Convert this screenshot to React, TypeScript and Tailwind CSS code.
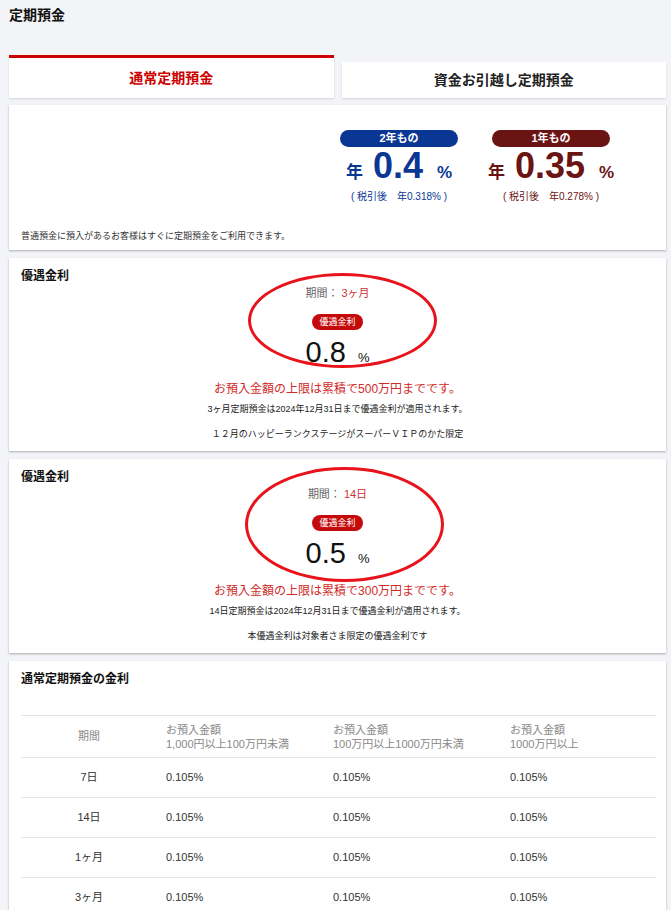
import React from 'react';

const FONT = 'font-["Liberation_Sans","Noto_Sans_CJK_JP",sans-serif]';

type Rate = {
  label: string;
  value: string;
  after: string;
  badge: string;
  text: string;
};

const rates: Rate[] = [
  { label: '2年もの', value: '0.4', after: '0.318', badge: 'bg-[#0b3794]', text: 'text-[#0b3794]' },
  { label: '1年もの', value: '0.35', after: '0.278', badge: 'bg-[#6a1414]', text: 'text-[#6a1414]' },
];

const RateBlock: React.FC<{ rate: Rate }> = ({ rate }) => (
  <div className="w-[118px] flex flex-col items-center">
    <div className={`w-full h-[17px] rounded-full ${rate.badge} text-white text-[11px] font-bold leading-[17px] text-center`}>
      {rate.label}
    </div>
    <div className={`mt-[1px] h-[36px] flex items-baseline whitespace-nowrap ${rate.text} font-bold`}>
      <span className="text-[17px] leading-[36px]">年</span>
      <span className="ml-[10px] text-[36px] leading-[36px]">{rate.value}</span>
      <span className="ml-[14px] text-[17px] leading-[36px]">%</span>
    </div>
    <div className={`mt-[6px] text-[10px] leading-[14px] whitespace-nowrap ${rate.text}`}>
      ( 税引後　年{rate.after}% )
    </div>
  </div>
);

type Special = {
  period: string;
  rate: string;
  limit: string;
  note: string;
  extra: string;
  ellipse: string;
  gap: string;
};

const specials: Special[] = [
  {
    period: '3ヶ月',
    rate: '0.8',
    limit: 'お預入金額の上限は累積で500万円までです。',
    note: '3ヶ月定期預金は2024年12月31日まで優遇金利が適用されます。',
    extra: '１２月のハッピーランクステージがスーパーＶＩＰのかた限定',
    ellipse: 'top-[15px] left-[239px] w-[189px] h-[95px]',
    gap: 'mt-[13px]',
  },
  {
    period: '14日',
    rate: '0.5',
    limit: 'お預入金額の上限は累積で300万円までです。',
    note: '14日定期預金は2024年12月31日まで優遇金利が適用されます。',
    extra: '本優遇金利は対象者さま限定の優遇金利です',
    ellipse: 'top-[8px] left-[236px] w-[199px] h-[115px]',
    gap: 'mt-[14px]',
  },
];

const SpecialCard: React.FC<{ s: Special }> = ({ s }) => (
  <div className="relative bg-white shadow-[0_1px_2px_rgba(0,0,0,0.3)] px-3 pt-[10px] pb-[10px]">
    <div className="text-[12px] leading-[16px] font-bold text-[#111]">優遇金利</div>
    <div className="flex flex-col items-center">
      <div className="mt-[1px] text-[11px] leading-[16px] text-[#666]">
        期間：<span className="ml-[3px] text-[#cc3333]">{s.period}</span>
      </div>
      <div className="mt-[13px] h-[16px] px-[7px] rounded-full bg-[#c40a0a] text-white text-[9px] leading-[16px]">
        優遇金利
      </div>
      <div className="mt-[6px] h-[32px] flex items-baseline text-[#111]">
        <span className="text-[29px] leading-[32px]">{s.rate}</span>
        <span className="ml-[12px] text-[13px] leading-[32px]">%</span>
      </div>
      <div className={`${s.gap} text-[12px] leading-[16px] text-[#d02a2a]`}>{s.limit}</div>
      <div className="mt-[5px] text-[9px] leading-[14px] text-[#222]">{s.note}</div>
      <div className="mt-[11px] text-[9px] leading-[14px] text-[#222]">{s.extra}</div>
    </div>
    <div className={`absolute ${s.ellipse} rounded-[50%] border-[3px] border-[#e8131b] pointer-events-none`} />
  </div>
);

const periods = ['7日', '14日', '1ヶ月', '3ヶ月', '6ヶ月', '1年'];

export default function App() {
  return (
    <div className={`${FONT} h-[910px] overflow-hidden bg-[#f3f4f7] pl-[9px] pr-[5px] pt-[5px]`}>
      <h1 className="text-[14px] leading-[20px] font-bold text-[#111]">定期預金</h1>

      {/* Tabs */}
      <div className="mt-[30px] flex items-end gap-2">
        <div className="flex-1 h-[43px] bg-white border-t-[3px] border-[#cc0000] shadow-[0_1px_2px_rgba(0,0,0,0.12)] flex items-center justify-center text-[14px] font-bold text-[#cc0000]">
          通常定期預金
        </div>
        <div className="flex-1 h-[36px] bg-white shadow-[0_1px_2px_rgba(0,0,0,0.12)] flex items-center justify-center text-[14px] font-bold text-[#222]">
          資金お引越し定期預金
        </div>
      </div>

      <div className="mt-[7px] flex flex-col gap-2">
        {/* Rates */}
        <div className="bg-white shadow-[0_1px_2px_rgba(0,0,0,0.3)] px-3 pt-[25px] pb-[7px]">
          <div className="flex justify-end gap-[34px] pr-[44px]">
            {rates.map((r) => (
              <RateBlock key={r.label} rate={r} />
            ))}
          </div>
          <p className="mt-[25px] text-[9px] leading-[14px] text-[#333]">
            普通預金に預入があるお客様はすぐに定期預金をご利用できます。
          </p>
        </div>

        {specials.map((s) => (
          <SpecialCard key={s.period} s={s} />
        ))}

        {/* Normal rate table */}
        <div className="bg-white shadow-[0_1px_2px_rgba(0,0,0,0.3)] pl-3 pr-[10px] pt-[10px] pb-4">
          <div className="text-[12px] leading-[16px] font-bold text-[#111]">通常定期預金の金利</div>
          <table className="mt-[28px] w-full border-collapse text-[11px]">
            <thead>
              <tr className="border-t border-b border-[#e4e4e4] text-[#888] h-[42px]">
                <th className="w-[136px] font-normal text-center">期間</th>
                <th className="w-[167px] font-normal text-left pl-[9px] leading-[14px]">
                  お預入金額<br />1,000円以上100万円未満
                </th>
                <th className="w-[177px] font-normal text-left pl-[9px] leading-[14px]">
                  お預入金額<br />100万円以上1000万円未満
                </th>
                <th className="font-normal text-left pl-[9px] leading-[14px]">
                  お預入金額<br />1000万円以上
                </th>
              </tr>
            </thead>
            <tbody className="text-[#333]">
              {periods.map((p) => (
                <tr key={p} className="border-b border-[#e4e4e4] h-[40px]">
                  <td className="text-center">{p}</td>
                  <td className="pl-[9px]">0.105%</td>
                  <td className="pl-[9px]">0.105%</td>
                  <td className="pl-[9px]">0.105%</td>
                </tr>
              ))}
            </tbody>
          </table>
        </div>
      </div>
    </div>
  );
}
